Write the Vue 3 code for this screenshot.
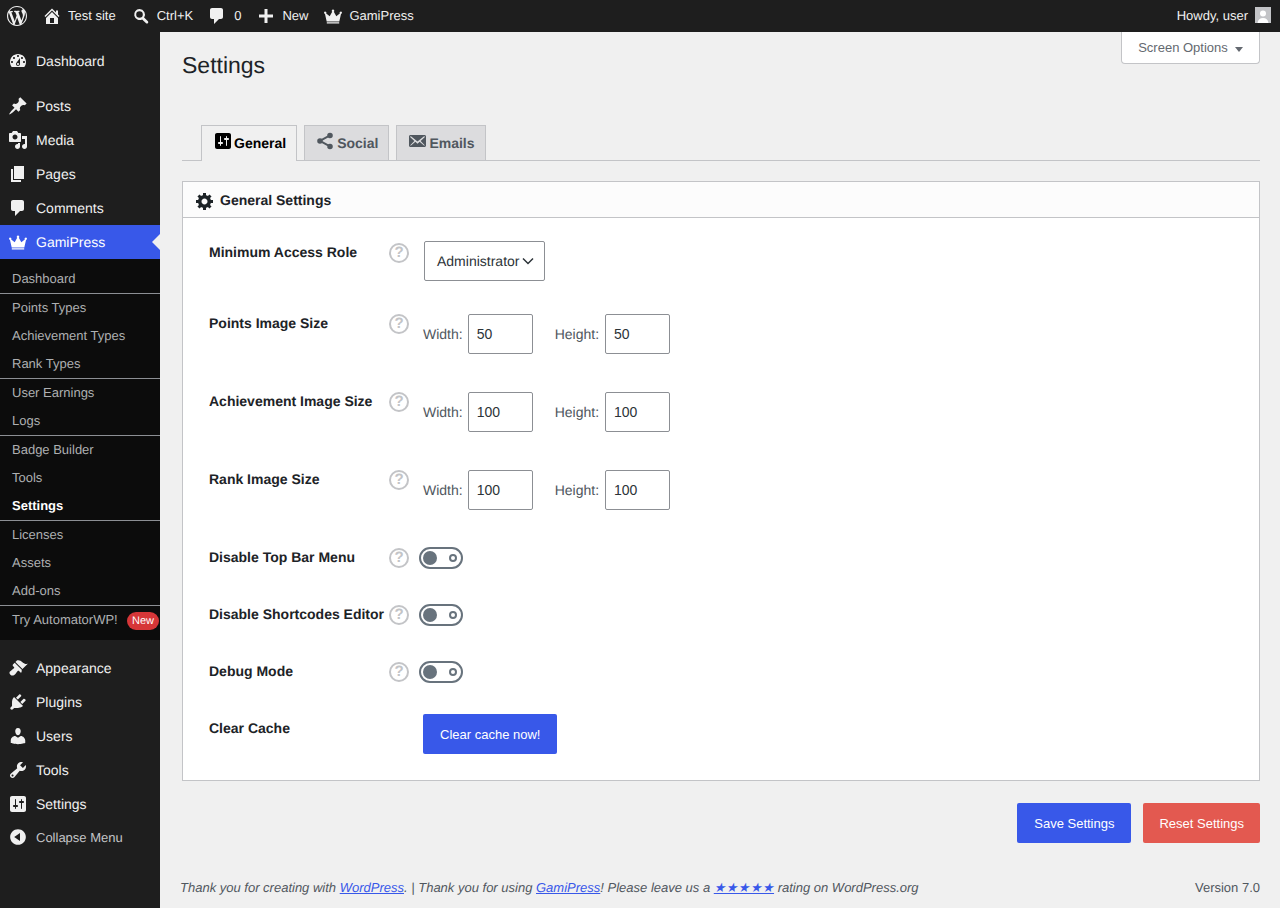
<template>
  <div class="admin">
    <header class="topbar">
      <div class="top-left">
        <svg class="wp-logo" viewBox="0 0 20 20"><path :d="icons.wordpress" /></svg>
        <span class="top-item home"><svg viewBox="0 0 20 20"><path :d="icons.home" /></svg>Test site</span>
        <span class="top-item search"><svg viewBox="0 0 20 20"><path :d="icons.search" /></svg>Ctrl+K</span>
        <span class="top-item comment"><svg viewBox="0 0 20 20"><path :d="icons.comments" /></svg>0</span>
        <span class="top-item plus"><svg viewBox="0 0 20 20"><path :d="icons.plus" /></svg>New</span>
        <span class="top-item crown"><svg viewBox="0 0 20 20"><path :d="icons.crown" /></svg>GamiPress</span>
      </div>
      <div class="top-right">
        Howdy, user
        <span class="avatar">
          <svg viewBox="0 0 16 16"><circle cx="8" cy="6.5" r="3" fill="#fff" /><path d="M2.5 16c.5-3.5 2.5-5 5.500-5s5 1.500 5.500 5z" fill="#fff" /></svg>
        </span>
      </div>
    </header>

    <div class="layout">
      <aside class="sidebar">
        <nav class="menu first">
          <a class="menu-item"><svg viewBox="0 0 20 20"><path :d="icons.dashboard" /></svg>Dashboard</a>
        </nav>
        <nav class="menu second">
          <a v-for="item in menuTop" :key="item.label" class="menu-item">
            <svg viewBox="0 0 20 20"><path :d="icons[item.icon]" /></svg>{{ item.label }}
          </a>
          <a class="menu-item active">
            <svg viewBox="0 0 20 20"><path :d="icons.crown" /></svg>GamiPress
            <span class="arrow"></span>
          </a>
        </nav>
        <ul class="submenu">
          <li
            v-for="sub in submenu"
            :key="sub.label"
            :class="{ divided: sub.divider, current: sub.current }"
          >
            {{ sub.label }}
            <span v-if="sub.badge" class="badge">{{ sub.badge }}</span>
          </li>
        </ul>
        <nav class="menu third">
          <a v-for="item in menuBottom" :key="item.label" class="menu-item">
            <svg viewBox="0 0 20 20"><path :d="icons[item.icon]" /></svg>{{ item.label }}
          </a>
          <a class="menu-item collapse">
            <svg viewBox="0 0 20 20"><path :d="icons.collapse" /></svg>Collapse Menu
          </a>
        </nav>
      </aside>

      <main class="content">
        <div class="page-head">
          <h1>Settings</h1>
          <button class="screen-options">Screen Options<span class="caret"></span></button>
        </div>

        <div class="tabs">
          <a class="tab active"><svg viewBox="0 0 20 20"><path :d="icons.settings" /></svg>General</a>
          <a class="tab"><svg viewBox="0 0 20 20"><path :d="icons.share" /></svg>Social</a>
          <a class="tab"><svg viewBox="0 0 20 20"><path :d="icons.email" /></svg>Emails</a>
        </div>

        <section class="panel">
          <h2 class="panel-title"><svg viewBox="0 0 20 20"><path :d="icons.gear" /></svg>General Settings</h2>
          <div class="panel-body">
            <div class="row role-row">
              <label class="row-label">Minimum Access Role</label>
              <span class="help">?</span>
              <div class="select-box">
                Administrator
                <svg viewBox="0 0 12 8"><path d="M1 1.500l5 5 5-5" /></svg>
              </div>
            </div>

            <div v-for="size in sizes" :key="size.label" class="row size-row">
              <label class="row-label">{{ size.label }}</label>
              <span class="help">?</span>
              <div class="size-fields">
                <label>Width:</label>
                <input type="text" :value="size.value" />
                <label class="height-label">Height:</label>
                <input type="text" :value="size.value" />
              </div>
            </div>

            <div v-for="toggle in toggles" :key="toggle" class="row toggle-row">
              <label class="row-label">{{ toggle }}</label>
              <span class="help">?</span>
              <span class="toggle"><i class="knob"></i><i class="ring"></i></span>
            </div>

            <div class="row cache-row">
              <label class="row-label">Clear Cache</label>
              <button class="btn blue">Clear cache now!</button>
            </div>
          </div>
        </section>

        <div class="actions">
          <button class="btn blue">Save Settings</button>
          <button class="btn red">Reset Settings</button>
        </div>

        <footer class="footer">
          <em>Thank you for creating with <a>WordPress</a>. | Thank you for using <a>GamiPress</a>! Please leave us a <a class="stars">★★★★★</a> rating on WordPress.org</em>
          <span>Version 7.0</span>
        </footer>
      </main>
    </div>
  </div>
</template>

<script setup>
const icons = {
  wordpress: 'M20 10c0-5.51-4.49-10-10-10C4.48 0 0 4.49 0 10c0 5.52 4.48 10 10 10 5.51 0 10-4.48 10-10zM7.780 15.370L4.370 6.220c.55-.02 1.170-.08 1.170-.08.5-.06.44-1.130-.06-1.110 0 0-1.450.11-2.370.11-.18 0-.37 0-.58-.01C4.120 2.690 6.870 1.110 10 1.110c2.330 0 4.450.87 6.050 2.340-.68-.11-1.650.39-1.650 1.580 0 .74.45 1.360.9 2.100.35.61.55 1.360.55 2.460 0 1.490-1.400 5-1.400 5l-3.030-8.370c.54-.02.82-.17.82-.17.5-.05.44-1.250-.06-1.220 0 0-1.440.12-2.380.12-.87 0-2.330-.12-2.330-.12-.5-.03-.56 1.200-.06 1.220l.92.08 1.260 3.410zM17.410 10c.24-.64.74-1.870.43-4.250.7 1.290 1.050 2.710 1.050 4.250 0 3.290-1.730 6.240-4.400 7.780.97-2.590 1.940-5.200 2.920-7.780zM6.100 18.090C3.120 16.650 1.110 13.530 1.110 10c0-1.300.23-2.480.72-3.590C3.250 10.300 4.670 14.200 6.100 18.090zm4.030-6.630l2.580 6.980c-.86.29-1.760.45-2.710.45-.79 0-1.570-.11-2.290-.33.81-2.380 1.620-4.740 2.420-7.100z',
  home: 'M16 8.500l1.530 1.530-1.060 1.060L10 4.620l-6.470 6.470-1.060-1.060L10 2.500l4 4v-2h2v4zm-6-2.460l6 5.990V18H4v-5.970zM12 17v-5H8v5h4z',
  search: 'M8.500 3a5.500 5.500 0 0 1 4.600 8.500l3.850 3.850a1.350 1.350 0 0 1-1.900 1.900l-3.900-3.850A5.500 5.500 0 1 1 8.500 3zm0 2.200a3.300 3.300 0 1 0 0 6.600 3.300 3.300 0 0 0 0-6.600z',
  plus: 'M17 8.500v3h-5.500V17h-3v-5.500H3v-3h5.500V3h3v5.500H17z',
  crown: 'M10 3.500a1.300 1.300 0 0 1 .8 2.330L13.300 10.200l3.500-2.800a1.200 1.200 0 1 1 1.200.500L16.300 15.500H3.700L2 7.900a1.200 1.200 0 1 1 1.200-.500l3.500 2.800 2.500-4.370A1.300 1.300 0 0 1 10 3.500zM3.800 16.300h12.400v1.200H3.800z',
  dashboard: 'M3.760 16h12.480c1.100-1.370 1.760-3.110 1.760-5 0-4.420-3.580-8-8-8s-8 3.580-8 8c0 1.890.66 3.630 1.760 5zM10 4c.55 0 1 .45 1 1s-.45 1-1 1-1-.45-1-1 .45-1 1-1zM6 6c.55 0 1 .45 1 1s-.45 1-1 1-1-.45-1-1 .45-1 1-1zm8 0c.55 0 1 .45 1 1s-.45 1-1 1-1-.45-1-1 .45-1 1-1zm-5.370 5.550L12 7v6c0 1.100-.9 2-2 2s-2-.9-2-2c0-.57.24-1.080.63-1.450zM4 10c.55 0 1 .45 1 1s-.45 1-1 1-1-.45-1-1 .45-1 1-1zm12 0c.55 0 1 .45 1 1s-.45 1-1 1-1-.45-1-1 .45-1 1-1zm-5 3c0-.55-.45-1-1-1s-1 .45-1 1 .45 1 1 1 1-.45 1-1z',
  post: 'M10.440 3.020l1.820-1.820 6.360 6.350-1.830 1.820c-1.050-.68-2.480-.57-3.410.36l-.75.75c-.92.93-1.040 2.350-.35 3.410l-1.830 1.820-2.410-2.410-2.800 2.790c-.42.42-3.380 2.710-3.800 2.290s1.860-3.390 2.280-3.810l2.790-2.790L4.100 9.360l1.830-1.820c1.050.69 2.480.57 3.400-.36l.75-.75c.93-.92 1.050-2.350.36-3.410z',
  media: 'M13 11V4c0-.55-.45-1-1-1h-1.670L9 1H5L3.670 3H2c-.55 0-1 .45-1 1v7c0 .55.45 1 1 1h10c.55 0 1-.45 1-1zM7 4.500c1.380 0 2.500 1.120 2.500 2.500S8.380 9.500 7 9.500 4.500 8.380 4.500 7 5.620 4.500 7 4.500zM14 6h5v10.500c0 1.380-1.120 2.500-2.500 2.500S14 17.880 14 16.500s1.120-2.500 2.500-2.500c.17 0 .34.02.5.05V9h-3V6zm-4 8.050V13h2v3.500c0 1.380-1.120 2.500-2.500 2.500S7 17.880 7 16.500 8.120 14 9.500 14c.17 0 .34.02.5.05z',
  page: 'M6 15V2h10v13H6zm-1 1h8v2H3V5h2v11z',
  comments: 'M5 2h9c1.100 0 2 .9 2 2v7c0 1.100-.9 2-2 2h-2l-5 5v-5H5c-1.100 0-2-.9-2-2V4c0-1.100.9-2 2-2z',
  appearance: 'M14.480 11.060L7.410 3.990l1.500-1.500c.5-.56 2.300-.47 3.510.32 1.210.8 1.430 1.280 2.910 2.100 1.180.64 2.450 1.260 4.450.85zm-.71.71L6.700 4.700 4.930 6.470c-.39.39-.39 1.020 0 1.410l1.060 1.060c.39.39.39 1.030 0 1.420-.6.6-1.430 1.110-2.210 1.690-.35.26-.7.53-1.010.84C1.430 13.230.78 15.040 2.400 16.660c1.610 1.610 3.420.96 4.760-.36.31-.31.58-.66.85-1.020.57-.78 1.080-1.610 1.690-2.210.39-.39 1.020-.39 1.410 0l1.060 1.060c.39.39 1.020.39 1.410 0z',
  plugins: 'M13.110 4.360L9.870 7.600 8 5.730l3.240-3.240c.35-.34 1.050-.2 1.560.32.52.51.66 1.210.31 1.550zm-8 1.770l.91-1.120 9.010 9.010-1.190.84c-.71.71-2.630 1.160-3.820 1.160H6.140L4.900 17.260c-.59.59-1.540.59-2.120 0-.59-.58-.59-1.530 0-2.120l1.240-1.240v-3.880c0-1.130.4-3.190 1.090-3.890zm7.260 3.970l3.240-3.240c.34-.35 1.040-.21 1.550.31.52.51.66 1.210.31 1.550l-3.240 3.250z',
  users: 'M10 9.250c-2.270 0-2.730-3.440-2.730-3.440C7 4.020 7.820 2 9.970 2c2.160 0 2.980 2.020 2.710 3.810 0 0-.41 3.440-2.680 3.440zm0 2.570L12.720 10c2.390 0 4.520 2.330 4.520 4.530v2.490s-3.650 1.130-7.240 1.130c-3.650 0-7.240-1.130-7.240-1.130v-2.490c0-2.250 1.940-4.480 4.470-4.480z',
  tools: 'M16.680 9.770c-1.340 1.340-3.300 1.670-4.950.99l-5.410 6.520c-.99.99-2.590.99-3.580 0s-.99-2.590 0-3.570l6.520-5.420c-.68-1.650-.35-3.610.99-4.950 1.280-1.280 3.120-1.620 4.720-1.060l-2.890 2.890 2.820 2.820 2.860-2.870c.53 1.580.18 3.390-1.080 4.650zM3.810 16.210c.4.39 1.040.39 1.430 0 .4-.4.4-1.040 0-1.430-.39-.4-1.030-.4-1.430 0-.39.39-.39 1.030 0 1.430z',
  settings: 'M18 16V4c0-1.100-.9-2-2-2H4c-1.100 0-2 .9-2 2v12c0 1.100.9 2 2 2h12c1.100 0 2-.9 2-2zM8 11h1c.55 0 1 .45 1 1s-.45 1-1 1H8v1.500c0 .28-.22.5-.5.5s-.5-.22-.5-.5V13H6c-.55 0-1-.45-1-1s.45-1 1-1h1V5.500c0-.28.22-.5.5-.5s.5.22.5.5V11zm5-2h-1c-.55 0-1-.45-1-1s.45-1 1-1h1V5.500c0-.28.22-.5.5-.5s.5.22.5.5V7h1c.55 0 1 .45 1 1s-.45 1-1 1h-1v5.500c0 .28-.22.5-.5.5s-.5-.22-.5-.5V9z',
  collapse: 'M10 2.160c4.330 0 7.840 3.510 7.840 7.840s-3.510 7.840-7.840 7.840S2.160 14.330 2.160 10 5.710 2.160 10 2.160zm2 11.720V6.120L6.180 9.970z',
  share: 'M15 1.700a2.800 2.800 0 1 1 0 5.600 2.800 2.800 0 0 1 0-5.600zM15 12.700a2.800 2.800 0 1 1 0 5.600 2.800 2.800 0 0 1 0-5.600zM5 7.200a2.800 2.800 0 1 1 0 5.600 2.800 2.800 0 0 1 0-5.600zM4.500 9.100l10-5.500.9 1.700-10 5.500zM5.400 9l10 5.600-.9 1.700-10-5.600z',
  email: 'M19 14.500v-9c0-.83-.67-1.500-1.500-1.500H3.490c-.83 0-1.500.67-1.500 1.500v9c0 .83.67 1.500 1.500 1.500H17.500c.83 0 1.500-.67 1.500-1.500zm-1.310-9.110c.33.33.15.67-.03.84L13.600 9.950l3.900 4.060c.12.14.2.36.06.51-.13.16-.43.15-.56.05l-4.370-3.730-2.140 1.950-2.130-1.950-4.370 3.730c-.13.1-.43.11-.56-.05-.14-.15-.06-.37.06-.51l3.900-4.060-4.060-3.720c-.18-.17-.36-.51-.03-.84s.67-.17.95.07l6.240 5.040 6.250-5.040c.28-.24.62-.4.95-.07z',
  gear: 'M18 12h-2.180c-.17.7-.44 1.350-.81 1.930l1.540 1.540-2.100 2.100-1.540-1.540c-.58.36-1.230.63-1.910.79V19H8v-2.180c-.68-.16-1.330-.43-1.910-.79l-1.540 1.540-2.120-2.120 1.540-1.540c-.36-.58-.63-1.230-.79-1.910H1V9.030h2.170c.16-.7.44-1.350.8-1.940L2.430 5.550l2.100-2.100 1.540 1.540c.58-.37 1.240-.64 1.930-.81V2h3v2.180c.68.16 1.330.43 1.910.79l1.540-1.540 2.120 2.120-1.540 1.540c.36.59.64 1.240.8 1.940H18V12zm-8.500 1.500c1.660 0 3-1.340 3-3s-1.340-3-3-3-3 1.340-3 3 1.340 3 3 3z'
}

const menuTop = [
  { label: 'Posts', icon: 'post' },
  { label: 'Media', icon: 'media' },
  { label: 'Pages', icon: 'page' },
  { label: 'Comments', icon: 'comments' }
]

const menuBottom = [
  { label: 'Appearance', icon: 'appearance' },
  { label: 'Plugins', icon: 'plugins' },
  { label: 'Users', icon: 'users' },
  { label: 'Tools', icon: 'tools' },
  { label: 'Settings', icon: 'settings' }
]

const submenu = [
  { label: 'Dashboard' },
  { label: 'Points Types', divider: true },
  { label: 'Achievement Types' },
  { label: 'Rank Types' },
  { label: 'User Earnings', divider: true },
  { label: 'Logs' },
  { label: 'Badge Builder', divider: true },
  { label: 'Tools' },
  { label: 'Settings', current: true },
  { label: 'Licenses', divider: true },
  { label: 'Assets' },
  { label: 'Add-ons' },
  { label: 'Try AutomatorWP!', divider: true, badge: 'New' }
]

const sizes = [
  { label: 'Points Image Size', value: 50 },
  { label: 'Achievement Image Size', value: 100 },
  { label: 'Rank Image Size', value: 100 }
]

const toggles = ['Disable Top Bar Menu', 'Disable Shortcodes Editor', 'Debug Mode']
</script>

<style>
html,
body {
  background: #f0f0f0;
}
</style>

<style scoped>
.admin {
  font-family: "Liberation Sans", Arial, sans-serif;
  font-size: 14px;
  color: #1e1e1e;
  height: 908px;
  overflow: hidden;
  text-rendering: geometricPrecision;
}

/* top bar */
.topbar {
  height: 32px;
  box-sizing: border-box;
  background: #1e1e1e;
  color: #f0f0f0;
  font-size: 13px;
  display: flex;
  justify-content: space-between;
  align-items: center;
  padding: 0 9px 2px 7px;
}
.top-left,
.top-right,
.top-item {
  display: flex;
  align-items: center;
}
.top-left svg,
.sidebar svg {
  fill: currentColor;
}
.wp-logo {
  width: 20px;
  height: 20px;
  color: #f0f0f0;
  margin-right: 15px;
  margin-top: 2px;
}
.top-item svg {
  width: 20px;
  height: 20px;
  margin-right: 6px;
  margin-top: 2px;
}
.top-item {
  margin-right: 15px;
}
.search {
  margin-right: 14px;
}
.comment svg {
  margin-right: 7px;
}
.top-right {
  gap: 7px;
}
.avatar {
  width: 16px;
  height: 16px;
  background: #c3c4c7;
  overflow: hidden;
  display: block;
}
.avatar svg {
  display: block;
  width: 16px;
  height: 16px;
}

/* sidebar */
.layout {
  display: flex;
  height: 876px;
}
.sidebar {
  width: 160px;
  flex: none;
  background: #1e1e1e;
  color: #f0f0f0;
}
.menu {
  display: flex;
  flex-direction: column;
}
.menu.first {
  margin-top: 12px;
}
.menu.second {
  margin-top: 11px;
}
.menu.third {
  margin-top: 11px;
}
.menu-item {
  position: relative;
  height: 34px;
  display: flex;
  align-items: center;
  padding-left: 8px;
  font-size: 14px;
}
.menu-item svg {
  width: 20px;
  height: 20px;
  margin-right: 8px;
  flex: none;
}
.menu-item.active {
  background: #3858e9;
  color: #fff;
}
.arrow {
  position: absolute;
  right: 0;
  top: 9px;
  border: 8px solid transparent;
  border-left-width: 0;
  border-right-color: #f0f0f0;
}
.menu-item.collapse {
  height: 32px;
  font-size: 13px;
  color: #c3c4c7;
}
.menu-item.collapse svg {
  color: #f0f0f0;
}
.submenu {
  list-style: none;
  margin: 0;
  padding: 6px 0;
  background: #0c0c0c;
  color: #aeb0b2;
  font-size: 13px;
}
.submenu li {
  position: relative;
  height: 28px;
  line-height: 28px;
  padding-left: 12px;
}
.submenu li.divided {
  border-top: 1px solid #8c8f94;
}
.submenu li.current {
  color: #fff;
  font-weight: 700;
}
.badge {
  position: absolute;
  right: 1px;
  top: 6px;
  height: 18px;
  line-height: 18px;
  padding: 0 5px;
  border-radius: 9px;
  background: #d63638;
  color: #fff;
  font-size: 11px;
}

/* content */
.content {
  flex: 1;
  min-width: 0;
  padding: 0 20px 0 22px;
}
.page-head {
  height: 93px;
  display: flex;
  justify-content: space-between;
  align-items: flex-start;
}
h1 {
  margin: 0;
  padding-top: 18px;
  font-size: 23px;
  line-height: 30px;
  font-weight: 400;
  color: #1d2327;
}
.screen-options {
  width: 139px;
  height: 32px;
  background: #fff;
  border: 1px solid #c3c4c7;
  border-top: 0;
  border-radius: 0 0 4px 4px;
  color: #646970;
  font: 13px "Liberation Sans", Arial, sans-serif;
  padding: 0;
}
.caret {
  display: inline-block;
  margin-left: 7px;
  border: 4px solid transparent;
  border-top: 5px solid #646970;
  border-bottom: 0;
  vertical-align: 0;
}
.tabs {
  display: flex;
  gap: 7px;
  height: 36px;
  padding-left: 19px;
  border-bottom: 1px solid #c3c4c7;
  box-sizing: border-box;
}
.tab {
  display: flex;
  align-items: center;
  gap: 2px;
  height: 35px;
  padding: 0 10px;
  border: 1px solid #c3c4c7;
  border-bottom: 0;
  background: #dcdcde;
  color: #50575e;
  font-weight: 700;
  font-size: 14px;
  box-sizing: border-box;
}
.tab.active {
  height: 36px;
  padding: 0 10px 1px 11px;
  gap: 1px;
  background: #f0f0f0;
  color: #000;
}
.tab svg {
  width: 20px;
  height: 20px;
  fill: currentColor;
  margin-top: -4px;
}

.panel {
  margin-top: 20px;
  background: #fff;
  border: 1px solid #c3c4c7;
}
.panel-title {
  display: flex;
  align-items: center;
  gap: 5px;
  margin: 0;
  height: 35px;
  box-sizing: content-box;
  padding: 0 0 0 12px;
  background: #fcfcfc;
  border-bottom: 1px solid #c3c4c7;
  font-size: 14px;
  line-height: 1;
  color: #1d2327;
}
.panel-title span,
.panel-title svg {
  flex: none;
}
.panel-title svg {
  width: 20px;
  height: 20px;
  fill: #1d2327;
  margin-top: 3px;
}
.panel-body {
  padding: 23px 26px 26px;
}
.row {
  display: flex;
  align-items: flex-start;
}
.row-label {
  width: 180px;
  flex: none;
  font-weight: 700;
  line-height: 20px;
  color: #1d2327;
  white-space: nowrap;
}
.help {
  width: 20px;
  height: 20px;
  box-sizing: border-box;
  border: 2px solid #c3c4c7;
  border-radius: 50%;
  color: #c3c4c7;
  font-weight: 700;
  font-size: 15px;
  line-height: 16px;
  text-align: center;
  flex: none;
}
.role-row {
  height: 40px;
  margin-bottom: 33px;
}
.role-row .row-label {
  padding-top: 1px;
}
.role-row .help {
  margin-top: 2px;
}
.select-box {
  margin-left: 15px;
  width: 121px;
  height: 40px;
  box-sizing: border-box;
  border: 1px solid #8c8f94;
  border-radius: 2px;
  padding-left: 12px;
  display: flex;
  align-items: center;
  gap: 3px;
  color: #2c3338;
  background: #fff;
}
.select-box svg {
  width: 12px;
  height: 8px;
  fill: none;
  stroke: #2c3338;
  stroke-width: 1.500;
}
.size-row {
  height: 40px;
  margin-bottom: 38px;
}
.size-row:nth-child(4) {
  margin-bottom: 37px;
}
.size-row .row-label {
  margin-top: -1px;
}
.size-fields {
  margin-left: 14px;
  display: flex;
  align-items: center;
  gap: 5px;
  color: #50575e;
}
.size-fields input {
  width: 65px;
  height: 40px;
  box-sizing: border-box;
  border: 1px solid #8c8f94;
  border-radius: 2px;
  padding: 0 8px;
  font: 14px "Liberation Sans", Arial, sans-serif;
  color: #2c3338;
  background: #fff;
}
.height-label {
  margin-left: 17px;
}
.height-label + input {
  margin-left: 1px;
}
.toggle-row {
  align-items: center;
  height: 22px;
  margin-bottom: 35px;
}
.toggle-row:nth-last-child(2) {
  margin-bottom: 31px;
}
.toggle-row .row-label {
  margin-top: -2px;
}
.toggle {
  margin-left: 10px;
  width: 44px;
  height: 22px;
  box-sizing: border-box;
  border: 2px solid #68737d;
  border-radius: 11px;
  display: flex;
  align-items: center;
  justify-content: space-between;
  padding: 0 4px 0 2px;
}
.knob {
  width: 14px;
  height: 14px;
  border-radius: 50%;
  background: #68737d;
}
.ring {
  width: 8px;
  height: 8px;
  box-sizing: border-box;
  border: 2px solid #68737d;
  border-radius: 50%;
}
.cache-row {
  height: 40px;
}
.cache-row .row-label {
  width: 214px;
  padding-top: 4px;
}
.btn {
  height: 40px;
  border: 0;
  border-radius: 2px;
  padding: 0 17px;
  color: #fff;
  font: 13px "Liberation Sans", Arial, sans-serif;
}
.btn.blue {
  background: #3858e9;
}
.btn.red {
  background: #e35950;
  padding: 0 16px;
}
.actions {
  margin-top: 22px;
  display: flex;
  justify-content: flex-end;
  gap: 12px;
}
.footer {
  margin: 37px 0 0 -2px;
  display: flex;
  justify-content: space-between;
  font-size: 13px;
  line-height: 16px;
  color: #50575e;
}
.footer a {
  color: #3858e9;
  text-decoration: underline;
}
.footer .stars {
  letter-spacing: .4px;
}
</style>
